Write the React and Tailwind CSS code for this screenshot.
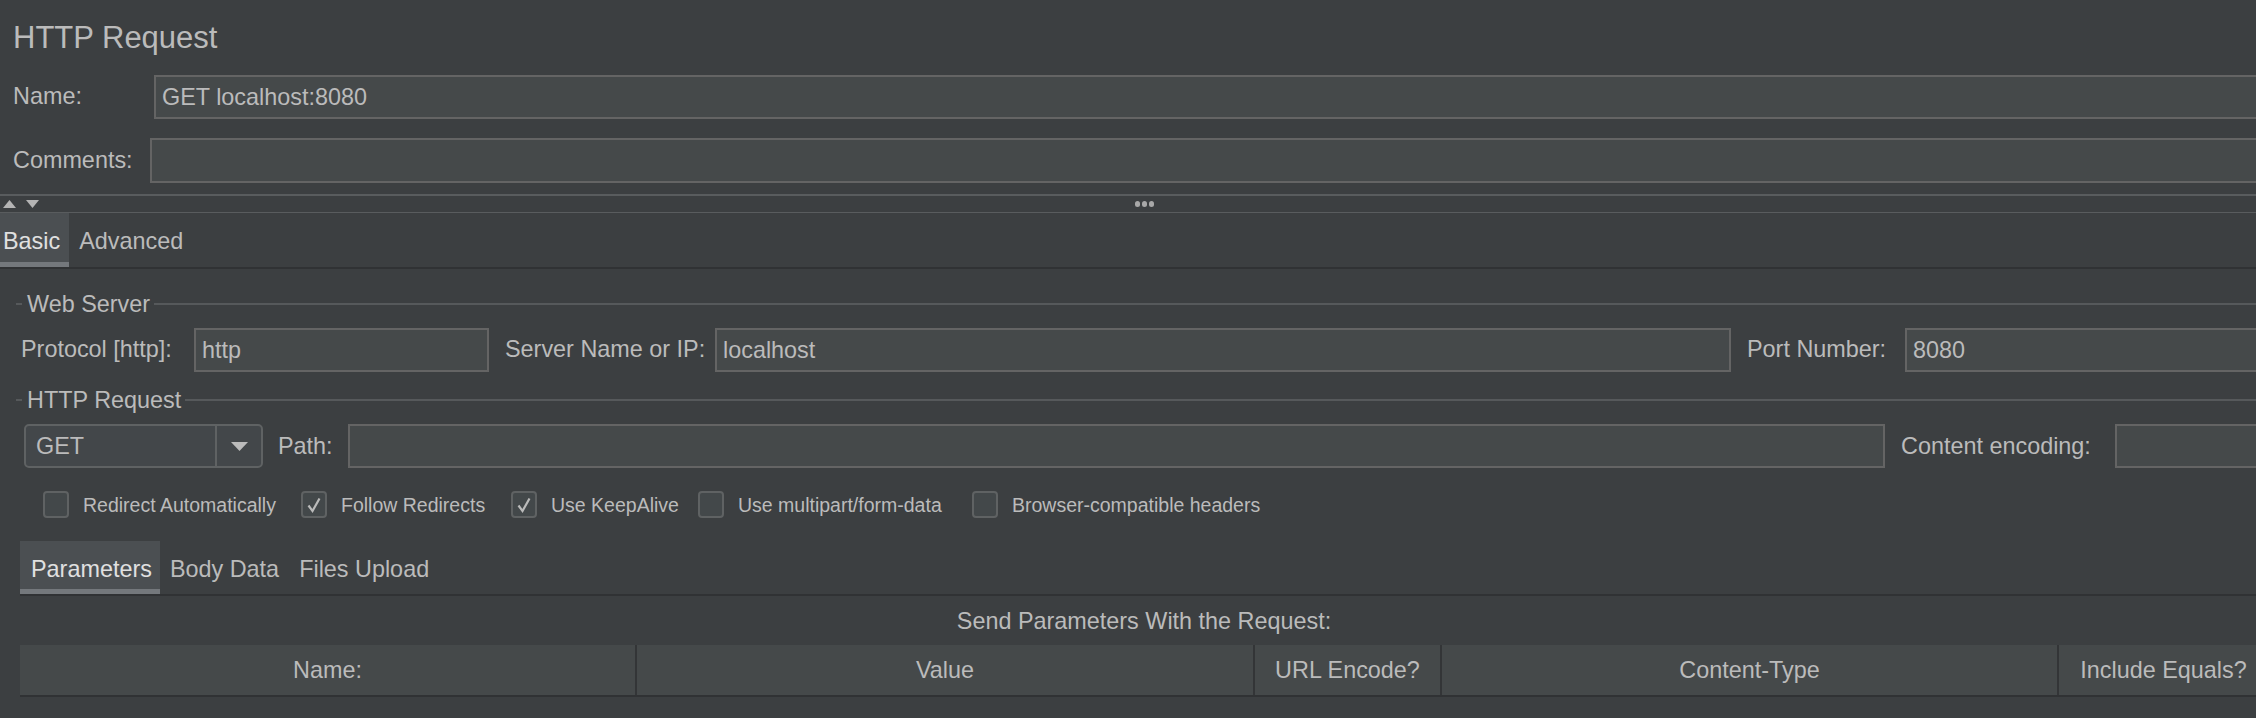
import React from "react";

const Field = ({ value = "", className = "" }) => (
  <div className={`flex h-full items-center border-2 border-[#646464] bg-[#45494a] pl-[6px] pt-[1px] text-[#bbbbbb] ${className}`}>
    {value}
  </div>
);

const TitledLine = ({ title }) => (
  <div className="flex h-[24px] items-center pr-[16px]">
    <div className="ml-[16px] h-[2px] w-[6px] bg-[#56595b]" />
    <span className="pl-[5px] pr-[4px] pt-[1px] leading-[23px]">{title}</span>
    <div className="h-[2px] flex-1 bg-[#56595b]" />
  </div>
);

const Check = ({ checked, label, width }) => (
  <div className={`flex items-center gap-[14px] ${width}`}>
    <div className="flex h-[27px] w-[26px] items-center justify-center rounded-[4px] border-2 border-[#5f6263] bg-[#43484a]">
      {checked && (
        <svg width="16" height="18" viewBox="0 0 16 18">
          <path d="M2.5 9.5 L6.5 15 L13.5 2.5" fill="none" stroke="#bbbbbb" strokeWidth="2.2" />
        </svg>
      )}
    </div>
    <span className="pt-[1px] text-[19.5px] leading-[20px]">{label}</span>
  </div>
);

const Tab = ({ label, active, pad = "px-[10px]" }) => (
  <div className={`flex h-full flex-col ${active ? "bg-[#4b4f52] text-[#e0e0e0]" : ""}`}>
    <div className={`flex-1 pt-[17px] leading-[23px] whitespace-nowrap ${pad}`}>{label}</div>
    <div className={`h-[5px] ${active ? "bg-[#74787c]" : ""}`} />
  </div>
);

const columns = [
  { label: "Name:", width: "w-[615px]" },
  { label: "Value", width: "w-[618px]" },
  { label: "URL Encode?", width: "w-[187px]" },
  { label: "Content-Type", width: "w-[617px]" },
  { label: "Include Equals?", width: "w-[211px]" },
];

export default function App() {
  return (
    <div className="h-[718px] w-[2256px] overflow-hidden bg-[#3c3f41] font-['Liberation_Sans',Arial,sans-serif] text-[23.4px] text-[#bbbbbb]">
      <div className="w-[2288px]">
        {/* Header */}
        <div className="pl-[13px] pt-[22px] text-[31px] leading-[31px]">HTTP Request</div>

        <div className="mt-[22px] flex h-[44px] items-center pr-[13px]">
          <div className="w-[154px] pl-[13px]">Name:</div>
          <Field value="GET localhost:8080" className="flex-1" />
        </div>

        <div className="mt-[19px] flex h-[45px] items-center pr-[13px]">
          <div className="w-[150px] pl-[13px]">Comments:</div>
          <Field className="flex-1" />
        </div>

        {/* Splitter */}
        <div className="mt-[11px] h-[2px] bg-[#595c5e]" />
        <div className="flex h-[16px] items-center">
          <div className="flex w-[60px] items-center gap-[10px] pl-[3px]">
            <svg width="13" height="8" viewBox="0 0 13 8">
              <path d="M6.5 0 L13 8 L0 8 Z" fill="#b4b4b4" />
            </svg>
            <svg width="13" height="8" viewBox="0 0 13 8">
              <path d="M0 0 L13 0 L6.5 8 Z" fill="#b4b4b4" />
            </svg>
          </div>
          <div className="flex flex-1 justify-center gap-[2px]">
            <div className="h-[6px] w-[5px] rounded-full bg-[#a8a8a8]" />
            <div className="h-[6px] w-[5px] rounded-full bg-[#a8a8a8]" />
            <div className="h-[6px] w-[5px] rounded-full bg-[#a8a8a8]" />
          </div>
          <div className="w-[60px]" />
        </div>
        <div className="h-[1px] bg-[#595c5e]" />

        {/* Main tabs */}
        <div className="flex h-[54px]">
          <Tab label="Basic" active pad="pl-[3px] pr-[9px]" />
          <Tab label="Advanced" />
        </div>
        <div className="h-[2px] bg-[#303234]" />

        {/* Web Server */}
        <div className="mt-[23px]">
          <TitledLine title="Web Server" />
        </div>
        <div className="mt-[12px] flex h-[44px] items-center">
          <div className="w-[194px] pl-[21px] whitespace-nowrap">Protocol [http]:</div>
          <Field value="http" className="w-[295px]" />
          <div className="w-[226px] pl-[16px] whitespace-nowrap">Server Name or IP:</div>
          <Field value="localhost" className="w-[1016px]" />
          <div className="w-[174px] pl-[16px] whitespace-nowrap">Port Number:</div>
          <Field value="8080" className="mr-[16px] flex-1" />
        </div>

        {/* HTTP Request */}
        <div className="mt-[16px]">
          <TitledLine title="HTTP Request" />
        </div>
        <div className="mt-[12px] flex h-[44px] items-center">
          <div className="ml-[24px] flex h-full w-[239px] rounded-[5px] border-2 border-[#5f6263] bg-[#43474a]">
            <div className="flex flex-1 items-center border-r-2 border-[#5f6263] pl-[10px] pt-[1px]">GET</div>
            <div className="flex w-[44px] items-center justify-center">
              <svg width="17" height="9" viewBox="0 0 17 9">
                <path d="M0 0 L17 0 L8.5 9 Z" fill="#bbbbbb" />
              </svg>
            </div>
          </div>
          <div className="w-[85px] pl-[15px] pt-[1px]">Path:</div>
          <Field className="w-[1537px]" />
          <div className="w-[230px] pl-[16px] pt-[1px] whitespace-nowrap">Content encoding:</div>
          <Field className="mr-[16px] flex-1" />
        </div>

        {/* Options */}
        <div className="mt-[23px] flex h-[27px] items-center pl-[43px]">
          <Check label="Redirect Automatically" width="w-[258px]" />
          <Check checked label="Follow Redirects" width="w-[210px]" />
          <Check checked label="Use KeepAlive" width="w-[187px]" />
          <Check label="Use multipart/form-data" width="w-[274px]" />
          <Check label="Browser-compatible headers" width="w-[320px]" />
        </div>

        {/* Parameter tabs */}
        <div className="ml-[20px] mt-[23px] flex h-[53px]">
          <Tab label="Parameters" active pad="pl-[11px] pr-[8px]" />
          <Tab label="Body Data" />
          <Tab label="Files Upload" />
        </div>
        <div className="ml-[20px] h-[2px] bg-[#303234]" />

        <div className="ml-[20px] flex h-[49px] w-[2248px] items-center justify-center pt-[2px]">
          Send Parameters With the Request:
        </div>

        <div className="ml-[20px] flex h-[50px] w-[2248px] bg-[#45494a]">
          {columns.map((c, i) => (
            <div
              key={c.label}
              className={`flex items-center justify-center pt-[2px] ${c.width} ${i > 0 ? "border-l-2 border-[#333537]" : ""}`}
            >
              {c.label}
            </div>
          ))}
        </div>
        <div className="ml-[20px] h-[2px] w-[2248px] bg-[#303234]" />
      </div>
    </div>
  );
}
